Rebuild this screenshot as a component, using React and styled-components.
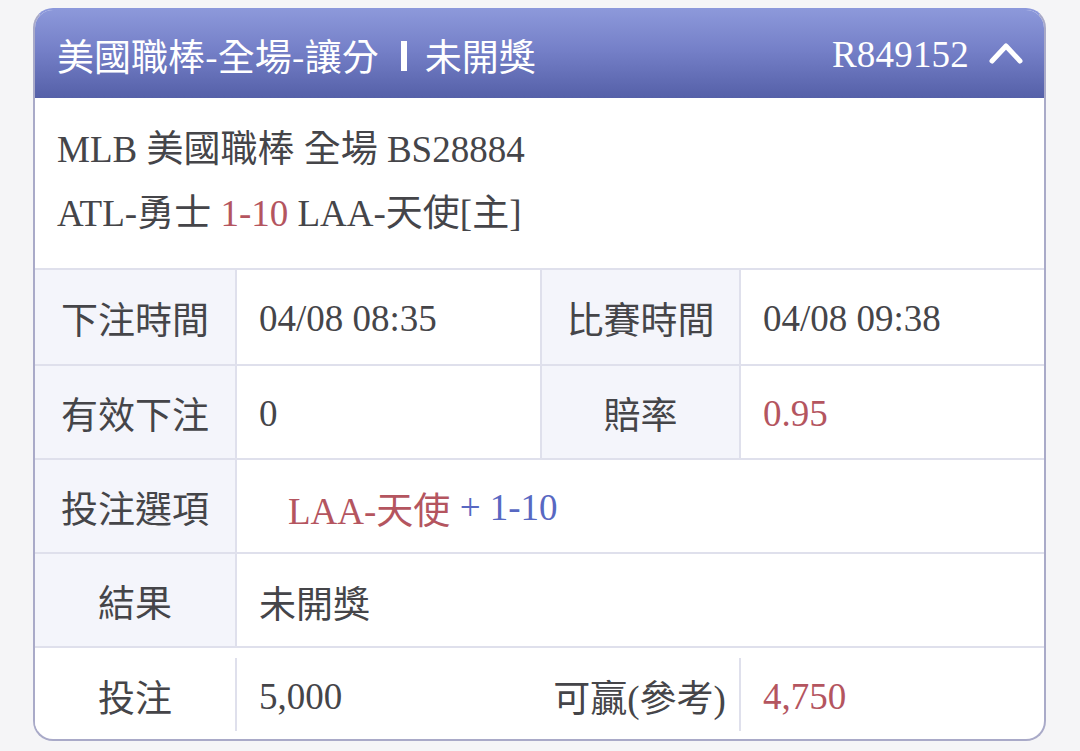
import React from 'react'
import styled, { createGlobalStyle } from 'styled-components'

const GlobalStyle = createGlobalStyle`
  html, body {
    margin: 0;
    padding: 0;
    background: #f5f5f7;
  }
  body {
    font-family: "Liberation Serif", "Noto Sans CJK TC", serif;
    color: #454549;
  }
`

const Page = styled.div`
  width: 1080px;
  height: 751px;
  padding: 8px 0 0 33px;
  box-sizing: border-box;
`

const Card = styled.div`
  width: 1013px;
  border: 2px solid #a9aac8;
  border-top-color: #8c98db;
  border-radius: 20px;
  overflow: hidden;
  background: #fff;
  box-sizing: border-box;
`

const Header = styled.div`
  height: 88px;
  display: flex;
  align-items: center;
  padding: 0 21px 0 22px;
  background: linear-gradient(180deg, #8c98da 0%, #7580c8 45%, #5560a8 100%);
  color: #fff;
`

const Title = styled.div`
  display: flex;
  align-items: center;
  font-family: "Noto Sans CJK TC", sans-serif;
  font-size: 37px;
  line-height: 1;
  flex: 1;
  padding-top: 2px;
`

const Bar = styled.span`
  display: inline-block;
  width: 6px;
  height: 30px;
  background: #fff;
  margin: 2px 18px 0 22px;
`

const OrderNo = styled.div`
  font-size: 37px;
  line-height: 1;
  letter-spacing: 0.2px;
`

const Chevron = styled.svg`
  margin-left: 20px;
  margin-top: -2px;
`

const Info = styled.div`
  padding: 20px 22px 22px;
  font-size: 37px;
  line-height: 64px;
  border-bottom: 2px solid #dfe0ec;
`

const Tone = styled.span`
  color: ${p => p.$tone === 'red' ? '#b4555f' : p.$tone === 'blue' ? '#5868c2' : 'inherit'};
`

const Row = styled.div`
  display: grid;
  grid-template-columns: 200px 305px 199px 1fr;
  height: ${p => p.$last ? '93px' : '94px'};
  padding: ${p => p.$last ? '10px 0 8px' : '0'};
  box-sizing: border-box;
  border-top: ${p => p.$first ? 'none' : '2px solid #dfe0ec'};
`

const Label = styled.div`
  display: flex;
  align-items: center;
  justify-content: center;
  padding-top: 2px;
  background: ${p => p.$plain ? '#fff' : '#f4f5fb'};
  border-left: ${p => p.$divided ? '2px solid #dfe0ec' : 'none'};
  font-size: 37px;
  white-space: nowrap;
`

const Value = styled.div`
  display: flex;
  align-items: center;
  grid-column: span ${p => p.$span || 1};
  padding: 3px 0 0 ${p => p.$indent || 22}px;
  border-left: 2px solid #dfe0ec;
  font-size: 37px;
  color: ${p => p.$red ? '#b4555f' : '#454549'};
  white-space: nowrap;
`

export default function App() {
  return (
    <Page>
      <GlobalStyle />
      <Card>
        <Header>
          <Title>
            美國職棒-全場-讓分<Bar />未開獎
          </Title>
          <OrderNo>R849152</OrderNo>
          <Chevron width="34" height="22" viewBox="0 0 34 22">
            <polyline points="3,19 17,4 31,19" fill="none" stroke="#fff" strokeWidth="5" strokeLinecap="round" strokeLinejoin="round" />
          </Chevron>
        </Header>

        <Info>
          <div>MLB 美國職棒 全場 BS28884</div>
          <div>
            ATL-勇士 <Tone $tone="red">1-10</Tone> LAA-天使[主]
          </div>
        </Info>

        <Row $first>
          <Label>下注時間</Label>
          <Value>04/08 08:35</Value>
          <Label $divided>比賽時間</Label>
          <Value>04/08 09:38</Value>
        </Row>
        <Row>
          <Label>有效下注</Label>
          <Value>0</Value>
          <Label $divided>賠率</Label>
          <Value $red>0.95</Value>
        </Row>
        <Row>
          <Label>投注選項</Label>
          <Value $span={3} $indent={51}>
            <Tone $tone="red">LAA-天使</Tone>&nbsp;<Tone $tone="blue">+ 1-10</Tone>
          </Value>
        </Row>
        <Row>
          <Label>結果</Label>
          <Value $span={3}>未開獎</Value>
        </Row>
        <Row $last>
          <Label $plain>投注</Label>
          <Value>5,000</Value>
          <Label $plain>可贏(參考)</Label>
          <Value $red>4,750</Value>
        </Row>
      </Card>
    </Page>
  )
}
